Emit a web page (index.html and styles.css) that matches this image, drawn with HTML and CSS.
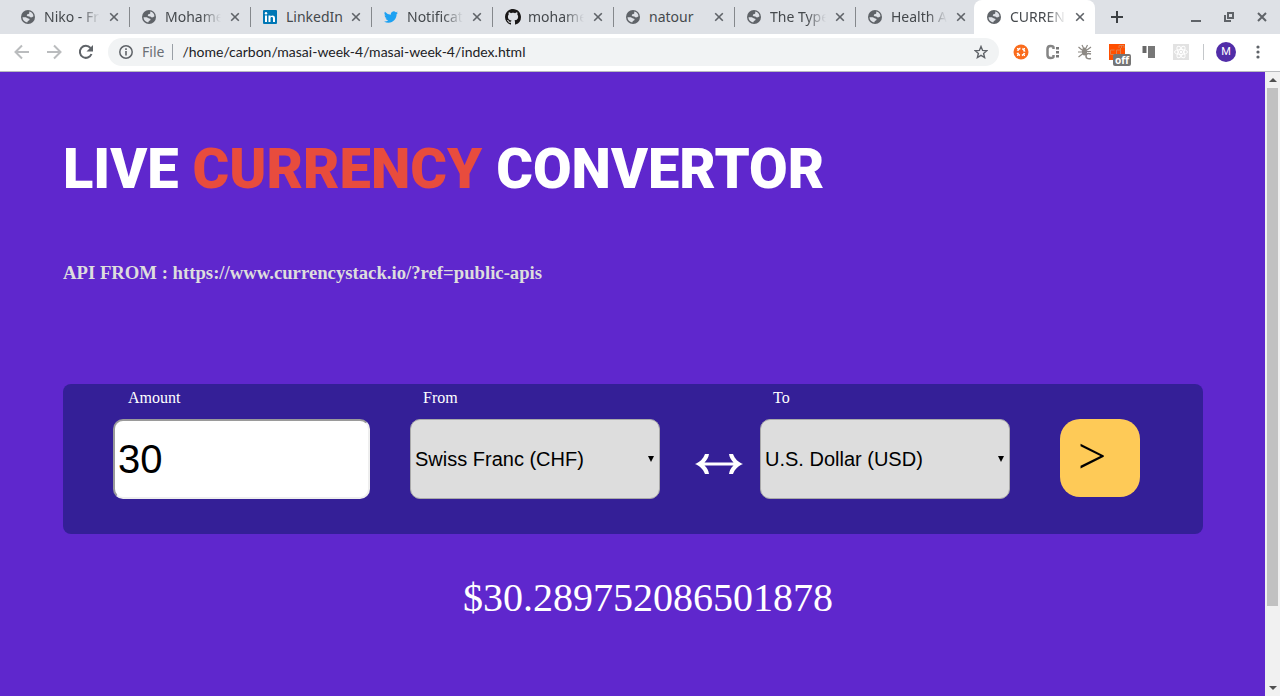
FILE: index.html
```html
<!DOCTYPE html>
<html lang="en">
<head>
<meta charset="utf-8">
<title>CURRENCY CONVERTOR</title>
<link rel="stylesheet" href="styles.css">
</head>
<body class="window">
<svg class="sprite" aria-hidden="true">
  <symbol id="globe" viewBox="0 0 14 14">
    <circle cx="7" cy="7" r="7" fill="#5f6368"/>
    <path d="M8.2 1.6C10.600 1.900 12.300 3.900 12.500 6.200L11 7.200 9.800 7.400 8.300 6.500 6.600 6.300 5.700 5.500 6.300 4.300 7.600 4.100 8.300 3.200zM1.500 7.200L4.800 7.200 6.600 8.200 8.600 8.900 8.300 10.300 6.900 11 6.200 12.400C3.500 12 1.600 9.900 1.500 7.200z" fill="#dee1e6"/>
  </symbol>
  <symbol id="close" viewBox="0 0 10 10"><path d="M1.200 1.200l7.600 7.600M8.800 1.200l-7.600 7.600" stroke="#5f6368" stroke-width="1.600" fill="none"/></symbol>
</svg>

<header class="tabstrip">
  <ul class="tabs">
    <li class="tab"><svg class="favicon"><use href="#globe"/></svg><span class="tab-title faded">Niko - Fre</span><button class="tab-close" aria-label="Close tab"><svg><use href="#close"/></svg></button></li>
    <li class="tab"><svg class="favicon"><use href="#globe"/></svg><span class="tab-title faded">Mohame</span><button class="tab-close" aria-label="Close tab"><svg><use href="#close"/></svg></button></li>
    <li class="tab"><svg class="favicon" viewBox="0 0 14 14"><rect width="14" height="14" rx="1" fill="#0077b5"/><path d="M2 5.500h2v6.500h-2zM5.500 5.500h2v1c1-1.700 4.500-1.500 4.500 1.500v4h-2v-3.500c0-1.900-2.500-1.900-2.500 0v3.500h-2z" fill="#fff"/><circle cx="3" cy="3.200" r="1.200" fill="#fff"/></svg><span class="tab-title">LinkedIn</span><button class="tab-close" aria-label="Close tab"><svg><use href="#close"/></svg></button></li>
    <li class="tab"><svg class="favicon" viewBox="0 2 24 20"><path d="M23.950 4.570a10 10 0 0 1-2.820.770 4.960 4.960 0 0 0 2.160-2.720c-.95.550-2 .950-3.130 1.180a4.920 4.920 0 0 0-8.380 4.480A13.900 13.900 0 0 1 1.640 3.160a4.920 4.920 0 0 0 1.520 6.570 4.900 4.900 0 0 1-2.230-.610v.060a4.920 4.920 0 0 0 3.950 4.820 5 5 0 0 1-2.210.080 4.940 4.940 0 0 0 4.600 3.420A9.870 9.870 0 0 1 0 19.540a14 14 0 0 0 7.550 2.210c9.050 0 14-7.500 14-13.980 0-.21 0-.42-.02-.63a10 10 0 0 0 2.420-2.570z" fill="#1da1f2"/></svg><span class="tab-title faded">Notificat</span><button class="tab-close" aria-label="Close tab"><svg><use href="#close"/></svg></button></li>
    <li class="tab"><svg class="favicon favicon-large" viewBox="0 0 16 16"><path d="M8 0C3.580 0 0 3.580 0 8c0 3.540 2.290 6.530 5.470 7.590.4.070.55-.17.55-.38 0-.19-.01-.82-.01-1.490-2.010.37-2.530-.49-2.690-.94-.09-.23-.48-.94-.82-1.130-.28-.15-.68-.52-.01-.53.63-.01 1.080.58 1.230.82.72 1.210 1.870.87 2.330.66.07-.52.28-.87.51-1.070-1.780-.2-3.640-.89-3.640-3.950 0-.87.31-1.590.82-2.150-.08-.2-.36-1.020.08-2.120 0 0 .67-.21 2.200.82.64-.18 1.320-.27 2-.27s1.360.09 2 .27c1.530-1.040 2.200-.82 2.200-.82.44 1.100.16 1.920.08 2.120.51.56.82 1.270.82 2.150 0 3.070-1.870 3.750-3.650 3.950.29.25.54.73.54 1.480 0 1.070-.01 1.930-.01 2.200 0 .21.15.46.55.38A8.010 8.010 0 0 0 16 8c0-4.420-3.580-8-8-8z" fill="#191717"/></svg><span class="tab-title faded">mohame</span><button class="tab-close" aria-label="Close tab"><svg><use href="#close"/></svg></button></li>
    <li class="tab"><svg class="favicon"><use href="#globe"/></svg><span class="tab-title">natour</span><button class="tab-close" aria-label="Close tab"><svg><use href="#close"/></svg></button></li>
    <li class="tab"><svg class="favicon"><use href="#globe"/></svg><span class="tab-title faded">The Type</span><button class="tab-close" aria-label="Close tab"><svg><use href="#close"/></svg></button></li>
    <li class="tab tab-last"><svg class="favicon"><use href="#globe"/></svg><span class="tab-title faded">Health A</span><button class="tab-close" aria-label="Close tab"><svg><use href="#close"/></svg></button></li>
    <li class="tab tab-active"><svg class="favicon"><use href="#globe"/></svg><span class="tab-title faded">CURREN</span><button class="tab-close" aria-label="Close tab"><svg><use href="#close"/></svg></button></li>
  </ul>
  <button class="new-tab" aria-label="New tab"><svg width="12" height="12" viewBox="0 0 12 12"><path d="M6 0v12M0 6h12" stroke="#3c4043" stroke-width="2"/></svg></button>
  <div class="window-controls">
    <button aria-label="Minimize"><svg width="10" height="10" viewBox="0 0 10 10"><path d="M0 9h10" stroke="#5f6368" stroke-width="2"/></svg></button>
    <button aria-label="Restore"><svg width="10" height="10" viewBox="0 0 10 10"><path d="M4 1h5v5H4zM1 3v6h6" fill="none" stroke="#5f6368" stroke-width="2"/></svg></button>
    <button aria-label="Close"><svg width="10" height="10" viewBox="0 0 10 10"><path d="M1 1l8 8M9 1l-8 8" stroke="#5f6368" stroke-width="2"/></svg></button>
  </div>
</header>

<nav class="toolbar">
  <button class="nav-button" aria-label="Back"><svg width="16" height="16" viewBox="0 0 16 16"><path d="M15 8H2M8 1.500L1.500 8 8 14.500" fill="none" stroke="#babcbe" stroke-width="2"/></svg></button>
  <button class="nav-button" aria-label="Forward"><svg width="16" height="16" viewBox="0 0 16 16"><path d="M1 8h13M8 1.500L14.500 8 8 14.500" fill="none" stroke="#babcbe" stroke-width="2"/></svg></button>
  <button class="nav-button" aria-label="Reload"><svg width="16" height="16" viewBox="0 0 16 16"><path d="M13.500 10A6 6 0 1 1 12.500 4" fill="none" stroke="#5f6368" stroke-width="2"/><path d="M15 1v6.500H8.500z" fill="#5f6368"/></svg></button>
  <div class="omnibox">
    <svg class="info" width="14" height="14" viewBox="0 0 14 14"><circle cx="7" cy="7" r="6.200" fill="none" stroke="#5f6368" stroke-width="1.500"/><path d="M7 6v4.500M7 3.300v1.700" stroke="#5f6368" stroke-width="1.600"/></svg>
    <label class="scheme" for="url">File</label>
    <input class="url" id="url" type="text" value="/home/carbon/masai-week-4/masai-week-4/index.html">
    <button class="star" aria-label="Bookmark"><svg width="14" height="14" viewBox="0 0 14 14"><path d="M7 1.500l1.600 3.900 4.200.3-3.200 2.700 1 4.100L7 10.300l-3.600 2.200 1-4.100L1.200 5.700l4.200-.3z" fill="none" stroke="#5f6368" stroke-width="1.400"/></svg></button>
  </div>
  <div class="extensions">
    <button aria-label="Extension"><svg width="16" height="16" viewBox="0 0 16 16"><circle cx="8" cy="8" r="7.500" fill="#fa6c1d"/><circle cx="8" cy="8" r="3.600" fill="none" stroke="#fff" stroke-width="1.800" stroke-dasharray="3.600 2.055" stroke-dashoffset="-1"/><path d="M4 4l1.500 1.500M10.500 10.500L12 12M12 4l-1.500 1.500M5.500 10.500L4 12" stroke="#fff" stroke-width="1"/></svg></button>
    <button aria-label="Extension"><svg width="16" height="16" viewBox="0 0 16 16"><path d="M8.500 5V3.500Q8.500 2 5.500 2T2.500 5v6q0 3 3 3t3-1.500V11" fill="none" stroke="#858585" stroke-width="2.500"/><path d="M12.500 3v2.500M12.500 7v2.500M12.500 11v2.500" stroke="#777" stroke-width="3"/></svg></button>
    <button aria-label="Extension"><svg width="16" height="16" viewBox="0 0 16 16"><ellipse cx="7.500" cy="7.500" rx="2.600" ry="4" fill="#8d8984"/><path d="M5 1l1.500 3M10.500 1L9 4M1.500 3L5 6M14 3l-4 3M1 8h5M9 7.500h5M1.500 13L6 9.500" fill="none" stroke="#8d8984" stroke-width="1.200"/><path d="M14 10Q9 8.500 9 12t5 2.500" fill="none" stroke="#8d8984" stroke-width="1.600"/></svg></button>
    <button class="cdm" aria-label="Extension off"><svg width="16" height="16" viewBox="0 0 16 16"><rect width="16" height="16" fill="#ff4f00"/><path d="M5.500 6H1.500v4.500h4M11.500 4v6.500H7.500V6h4M10 4V1.500h5V4M12.500 1.500V4" fill="none" stroke="#e0814f" stroke-width="1"/></svg><span class="badge">off</span></button>
    <button aria-label="Extension"><svg width="16" height="16" viewBox="0 0 16 16"><path d="M1.500 2h4v7h-4z" fill="#686868"/><path d="M7 2h7v12H7z" fill="#777"/></svg></button>
    <button aria-label="React"><svg width="16" height="16" viewBox="0 0 16 16"><rect width="16" height="16" fill="#e2e2e2"/><g fill="none" stroke="#fff"><ellipse cx="8" cy="8" rx="6.500" ry="2.500"/><ellipse cx="8" cy="8" rx="6.500" ry="2.500" transform="rotate(60 8 8)"/><ellipse cx="8" cy="8" rx="6.500" ry="2.500" transform="rotate(120 8 8)"/></g><circle cx="8" cy="8" r="1.200" fill="#fff"/></svg></button>
  </div>
  <button class="avatar" aria-label="Profile">M</button>
  <button class="menu" aria-label="Menu"><svg width="4" height="14" viewBox="0 0 4 14" fill="#5f6368"><circle cx="2" cy="2" r="1.600"/><circle cx="2" cy="7" r="1.600"/><circle cx="2" cy="12" r="1.600"/></svg></button>
</nav>

<div class="viewport">
  <main class="page">
    <h1 class="title">LIVE <span class="accent">CURRENCY</span> CONVERTOR</h1>
    <h3 class="source">API FROM : https://www.currencystack.io/?ref=public-apis</h3>
    <form class="panel">
      <div class="field field-amount">
        <label for="amount">Amount</label>
        <input class="amount" id="amount" type="text" value="30">
      </div>
      <div class="field field-select">
        <label for="from">From</label>
        <div class="select-wrap">
          <select id="from"><option>Swiss Franc (CHF)</option></select>
          <svg class="caret" viewBox="0 0 6 6"><path d="M0 0h6L3 6z"/></svg>
        </div>
      </div>
      <svg class="swap" width="48" height="20" viewBox="0 0 48 20" role="img" aria-label="to"><path d="M0 10C5 8 8 5 10 0h4C13.500 3.500 12 6 9.500 8.400h29C36 6 34.500 3.500 34 0H38c2 5 5 8 10 10-5 2-8 5-10 10h-4c.5-3.500 2-6 4.500-8.400h-29c2.500 2.400 4 4.900 4.500 8.400H10C8 15 5 12 0 10z" fill="#fff"/></svg>
      <div class="field field-select">
        <label for="to">To</label>
        <div class="select-wrap">
          <select id="to"><option>U.S. Dollar (USD)</option></select>
          <svg class="caret" viewBox="0 0 6 6"><path d="M0 0h6L3 6z"/></svg>
        </div>
      </div>
      <button class="convert" type="button">&gt;</button>
    </form>
    <p class="result">$30.289752086501878</p>
  </main>
  <div class="scrollbar" aria-hidden="true">
    <svg width="8" height="4" viewBox="0 0 8 4"><path d="M0 4h8L4 0z" fill="#505050"/></svg>
    <div class="track"><div class="thumb"></div></div>
    <svg width="8" height="4" viewBox="0 0 8 4"><path d="M0 0h8L4 4z" fill="#505050"/></svg>
  </div>
</div>
</body>
</html>
```

FILE: styles.css
```css
* { box-sizing: border-box; }

.window {
  margin: 0;
  min-height: 100vh;
  display: flex;
  flex-direction: column;
  font-family: "Liberation Serif", serif;
}

.sprite { display: none; }

.window button {
  border: 0;
  background: none;
  padding: 0;
  display: flex;
  align-items: center;
  justify-content: center;
}

.tabstrip {
  display: flex;
  height: 34px;
  padding-left: 8px;
  background: #dee1e6;
  font-family: "Noto Sans", "Open Sans", sans-serif;
}

.tabs {
  display: flex;
  flex: 0 1 1087px;
  min-width: 0;
  margin: 0;
  padding: 0;
  list-style: none;
}

.tab {
  position: relative;
  display: flex;
  flex: 1 1 0;
  min-width: 0;
  align-items: center;
  gap: 9px;
  padding: 0 10px 0 13px;
}

.tab::after {
  content: "";
  position: absolute;
  right: -1px;
  top: 7px;
  width: 1px;
  height: 20px;
  background: #85888c;
}

.tab-last::after,
.tab-active::after { display: none; }

.tab-active {
  margin-left: -2px;
  background: #fff;
  border-radius: 8px 8px 0 0;
}

.favicon { flex: none; width: 14px; height: 14px; }
.favicon-large { width: 16px; height: 16px; margin-right: -2px; }

.tab-title {
  flex: 1;
  min-width: 0;
  white-space: nowrap;
  font-size: 14px;
  line-height: 20px;
  color: #45494d;
}

.faded {
  -webkit-mask-image: linear-gradient(to right, #000 65%, transparent);
  mask-image: linear-gradient(to right, #000 65%, transparent);
}

.tab-close { flex: none; }
.tab-close svg { width: 10px; height: 10px; }

.new-tab { flex: none; width: 44px; }

.window-controls {
  display: flex;
  gap: 23px;
  margin-left: auto;
  padding-right: 13px;
}

.toolbar {
  display: flex;
  align-items: center;
  height: 38px;
  padding: 0 20px 1px 6px;
  background: #fff;
  border-bottom: 1px solid #b9bbbe;
  font-family: "Noto Sans", "Open Sans", sans-serif;
}

.nav-button { width: 32px; height: 28px; }

.omnibox {
  display: flex;
  flex: 1;
  align-items: center;
  height: 28px;
  margin-left: 6px;
  padding: 0 11px;
  border-radius: 14px;
  background: #f1f3f4;
}

.scheme {
  margin-left: 9px;
  padding-right: 8px;
  border-right: 1px solid #9aa0a6;
  font-size: 14px;
  line-height: 16px;
  color: #6b6f74;
}

.url {
  flex: 1;
  min-width: 0;
  border: 0;
  padding: 0 0 0 9px;
  background: none;
  font: 14px/20px Lato, sans-serif;
  color: #202124;
}

.extensions {
  display: flex;
  gap: 16px;
  padding: 0 14px;
  border-right: 1px solid #c4c7ca;
}

.cdm { position: relative; }

.badge {
  position: absolute;
  left: 4px;
  top: 10px;
  padding: 0 2px;
  border-radius: 2px;
  background: #757575;
  color: #fff;
  font: bold 10px/12px "Noto Sans", sans-serif;
}

.window .avatar {
  width: 20px;
  height: 20px;
  margin: 0 20px 0 12px;
  border-radius: 50%;
  background: #512da8;
  color: #fff;
  font: 11px/20px Roboto, sans-serif;
}

.viewport { display: flex; flex: 1; }

.page {
  flex: 1;
  min-width: 0;
  padding: 56px 62px 40px 63px;
  background: #5f27cd;
  color: #fff;
}

.title {
  margin: 0;
  font: 900 56px/82px Roboto, sans-serif;
}

.accent { color: #e84c3d; }

.source {
  margin: 52px 0 0;
  line-height: 22px;
  color: #ddd;
}

.panel {
  display: flex;
  align-items: flex-start;
  height: 150px;
  margin-top: 100px;
  padding: 0 50px;
  border-radius: 8px;
  background: #341f97;
}

.field { display: flex; flex-direction: column; min-width: 0; }
.field-amount { flex: 0 1 257px; margin-right: 40px; }
.field-select { flex: 0 1 250px; }

.field label {
  padding: 5px 0 12px 13px;
  font-size: 16px;
  line-height: 18px;
}

.field-amount label { padding-left: 15px; }

.amount {
  width: 100%;
  height: 80px;
  padding: 1px 3px;
  border: 2px solid;
  border-color: #9a9a9a #eee #eee #9a9a9a;
  border-radius: 10px;
  background: #fff;
  color: #000;
  font: 40px "Liberation Sans", sans-serif;
}

.select-wrap { position: relative; }

.select-wrap select {
  appearance: none;
  display: block;
  width: 100%;
  height: 80px;
  padding: 0 16px 0 4px;
  border: 1px solid #a9a9a9;
  border-radius: 10px;
  background: #ddd;
  color: #000;
  font: 20px "Liberation Sans", sans-serif;
}

.caret {
  position: absolute;
  right: 6px;
  top: 37px;
  width: 6px;
  height: 6px;
  pointer-events: none;
}

.swap { flex: none; margin: 70px 17px 0 35px; }

.window .convert {
  flex: none;
  width: 80px;
  height: 78px;
  margin: 35px 0 0 50px;
  padding: 0 18px 4px;
  justify-content: flex-start;
  border-radius: 20px;
  background: #feca57;
  color: #000;
  font: 50px "Liberation Serif", serif;
}

.result {
  margin: 41px 0 0;
  padding-left: 30px;
  text-align: center;
  font-size: 40px;
  line-height: 46px;
}

.scrollbar {
  display: flex;
  flex: none;
  flex-direction: column;
  align-items: center;
  gap: 6px;
  width: 15px;
  padding: 6px 0;
  background: #f1f1f1;
}

.track { display: flex; flex-direction: column; flex: 1; width: 11px; }
.track::after { content: ""; flex: 1; }
.thumb { flex: 7; background: #c1c1c1; }
```
